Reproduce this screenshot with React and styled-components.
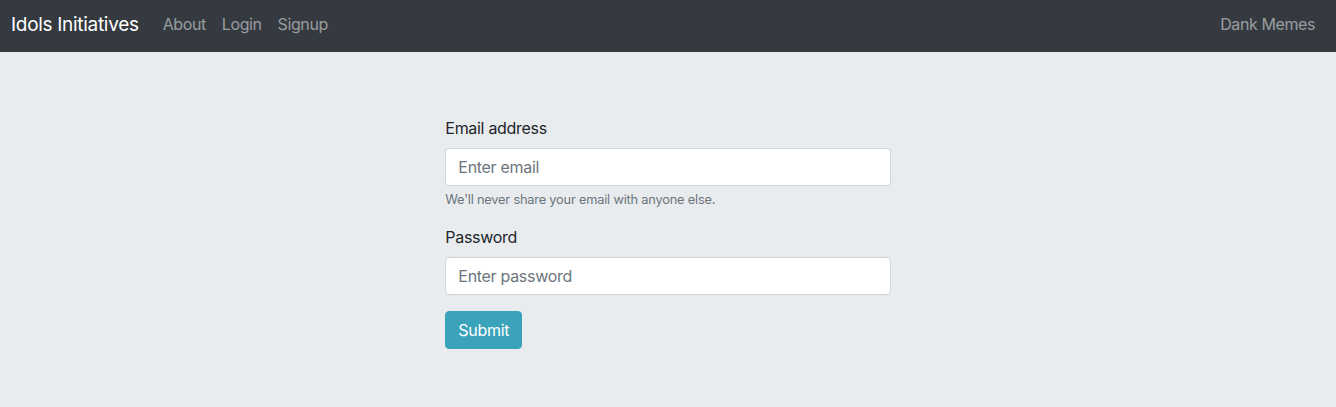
import React from 'react'
import styled, { createGlobalStyle } from 'styled-components'

const GlobalStyle = createGlobalStyle`
  html, body {
    margin: 0;
    padding: 0;
    background: #e9ecef;
    font-family: 'Inter', 'Roboto', 'Liberation Sans', sans-serif;
    letter-spacing: -0.3px;
    color: #212529;
  }
  * { box-sizing: border-box; }
`

const Navbar = styled.nav`
  display: flex;
  align-items: center;
  height: 52px;
  padding: 0 13px 4px 11px;
  background: #343a40;
`

const Brand = styled.a`
  font-size: 19px;
  color: #fff;
  margin-right: 16px;
  text-decoration: none;
  white-space: nowrap;
`

const NavList = styled.div`
  display: flex;
  margin-left: ${p => (p.right ? 'auto' : '0')};
`

const NavLink = styled.a`
  padding: 0 8px;
  font-size: 16px;
  letter-spacing: -0.4px;
  color: rgba(255, 255, 255, 0.5);
  text-decoration: none;
`

const Main = styled.main`
  display: flex;
  justify-content: center;
  padding: 64px 0;
  background: #e9ecef;
`

const Form = styled.form`
  width: 33.333%;
`

const FormGroup = styled.div`
  margin-bottom: 16px;
`

const Label = styled.label`
  display: block;
  margin-bottom: 8px;
  font-size: 16px;
  line-height: 24px;
`

const Input = styled.input`
  display: block;
  width: 100%;
  height: 38px;
  padding: 6px 12px;
  font-family: inherit;
  font-size: 16px;
  letter-spacing: -0.3px;
  color: #495057;
  background: #fff;
  border: 1px solid #ced4da;
  border-radius: 4px;
  outline: none;
  &::placeholder { color: #6c757d; }
`

const Help = styled.small`
  display: block;
  margin-top: 4px;
  font-size: 12.8px;
  line-height: 19px;
  letter-spacing: -0.2px;
  color: #6c757d;
`

const Button = styled.button`
  height: 38px;
  padding: 6px 12px;
  font-family: inherit;
  font-size: 16px;
  letter-spacing: -0.3px;
  color: #fff;
  background: #3aa3ba;
  border: 1px solid #3aa3ba;
  border-radius: 4px;
`

export default function App() {
  return (
    <>
      <GlobalStyle />
      <Navbar>
        <Brand href="#">Idols Initiatives</Brand>
        <NavList>
          <NavLink href="#">About</NavLink>
          <NavLink href="#">Login</NavLink>
          <NavLink href="#">Signup</NavLink>
        </NavList>
        <NavList right>
          <NavLink href="#">Dank Memes</NavLink>
        </NavList>
      </Navbar>
      <Main>
        <Form onSubmit={e => e.preventDefault()}>
          <FormGroup>
            <Label>Email address</Label>
            <Input type="email" placeholder="Enter email" />
            <Help>We'll never share your email with anyone else.</Help>
          </FormGroup>
          <FormGroup>
            <Label>Password</Label>
            <Input type="password" placeholder="Enter password" />
          </FormGroup>
          <Button type="submit">Submit</Button>
        </Form>
      </Main>
    </>
  )
}
